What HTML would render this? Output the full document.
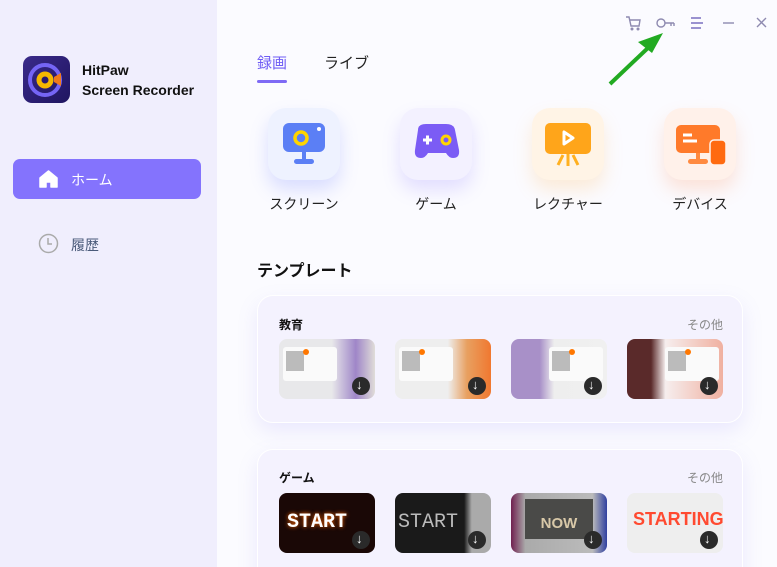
<!DOCTYPE html>
<html><head><meta charset="utf-8"><style>
*{margin:0;padding:0;box-sizing:border-box}
html,body{width:777px;height:567px;overflow:hidden}
body{font-family:"Liberation Sans","Noto Sans CJK JP",sans-serif;background:#fbfbff;position:relative}
#w{position:absolute;left:0;top:0;width:777px;height:567px;overflow:hidden}
.side{position:absolute;left:0;top:0;width:217px;height:567px;background:#f0eefd}
.abs{position:absolute}
.logo{left:23px;top:56px;width:47px;height:47px;border-radius:9px;background:linear-gradient(135deg,#3a2a8a,#1f1560)}
.brand{left:82px;top:60px;font-size:14px;font-weight:bold;color:#111;line-height:20px}
.nav{left:13px;top:159px;width:188px;height:40px;border-radius:7px;background:#8473fd;color:#fff;font-size:14px}
.ico{width:72px;height:72px;border-radius:18px;top:108px}
.lbl{top:194px;font-size:14px;color:#222;width:120px;text-align:center}
.card{left:257px;width:486px;border-radius:16px;background:#f4f2fe;border:1px solid #fff;box-shadow:0 8px 20px rgba(140,130,240,.15)}
.th{width:96px;height:60px;border-radius:8px;overflow:hidden}
.pn{position:absolute;left:4px;top:8px;width:54px;height:34px;background:#fafafa;border-radius:3px}
.pn:before{content:"";position:absolute;left:3px;top:4px;width:18px;height:20px;background:#bbb}
.pn:after{content:"";position:absolute;left:20px;top:2px;width:6px;height:6px;border-radius:50%;background:#f70}
.dl{position:absolute;right:5px;bottom:4px;width:18px;height:18px;border-radius:50%;background:#2a2a2a}
.dl:after{content:"↓";color:#fff;font-size:13px;position:absolute;left:4px;top:0;font-weight:bold}
.t{font-size:12px;font-weight:bold;color:#111}
.m{font-size:12px;color:#888}
</style></head><body><div id="w">
<div class="side"></div>
<div class="abs logo"><svg width="47" height="47" viewBox="0 0 47 47"><circle cx="22" cy="24" r="15" fill="none" stroke="#7565f5" stroke-width="4"/><circle cx="22" cy="24" r="8.5" fill="#f5b800"/><circle cx="22" cy="24" r="3.5" fill="#2a1b6e"/><path d="M31 21l7-4v13l-7-4z" fill="#f07a1a"/></svg></div>
<div class="abs brand">HitPaw<br>Screen Recorder</div>
<div class="abs nav"><svg class="abs" style="left:26px;top:11px" width="19" height="18" viewBox="0 0 19 18"><path d="M9.5 1L1 8v9h6v-5h5v5h6V8z" fill="#fff" stroke="#fff" stroke-linejoin="round" stroke-width="1.5"/></svg><span class="abs" style="left:58px;top:11px">ホーム</span></div>
<svg class="abs" style="left:38px;top:233px" width="21" height="21"><circle cx="10.5" cy="10.5" r="9" fill="none" stroke="#aaa" stroke-width="1.5"/><path d="M10 5v6h4" fill="none" stroke="#aaa" stroke-width="1.5"/></svg>
<div class="abs" style="left:71px;top:235px;font-size:14px;color:#4a5a7a">履歴</div>

<svg class="abs" style="left:624px;top:14px" width="150" height="18" viewBox="0 0 150 18" fill="none" stroke="#8e8ab0" stroke-width="1.4"><path d="M2 3h3l2 9h8l1-6H6"/><circle cx="8" cy="15" r=".8"/><circle cx="14" cy="15" r=".8"/><circle cx="37" cy="9" r="4"/><path d="M41 9h9M47 9v3M50 9v3"/><path d="M67 4h10M67 9h12M67 14h10" stroke="#7a70c0"/><path d="M99 9h11"/><path d="M133 4l9 9M142 4l-9 9"/></svg>
<svg class="abs" style="left:605px;top:28px" width="65" height="60"><path d="M5 56L45 18" stroke="#22aa22" stroke-width="4"/><path d="M58 5L33 14l14 11z" fill="#22aa22"/></svg>

<div class="abs" style="left:257px;top:52px;font-size:15px;color:#6f5cf5">録画</div>
<div class="abs" style="left:257px;top:80px;width:30px;height:3px;background:#7e6af5;border-radius:2px"></div>
<div class="abs" style="left:324px;top:52px;font-size:15px;color:#222">ライブ</div>

<div class="abs ico" style="left:268px;background:#eef2ff;box-shadow:0 10px 18px rgba(100,120,255,.22)"><svg width="72" height="72"><rect x="15" y="15" width="42" height="29" rx="6" fill="#5b7ff5"/><circle cx="33" cy="30" r="6" fill="none" stroke="#ffd400" stroke-width="3.5"/><circle cx="51" cy="21" r="2" fill="#fff"/><rect x="34" y="44" width="4" height="8" fill="#5b7ff5"/><rect x="26" y="51" width="20" height="5" rx="2.5" fill="#5b7ff5"/></svg></div>
<div class="abs ico" style="left:400px;background:#f3f1ff;box-shadow:0 10px 18px rgba(130,110,255,.2)"><svg width="72" height="72"><path d="M18 22q0-6 8-6h20q8 0 9 6l4 20q1 8-6 8-4 0-7-5H28q-3 5-7 5-7 0-6-8z" fill="#7b5cf5"/><path d="M23 32h9M27.5 27.5v9" stroke="#fff" stroke-width="3"/><circle cx="46" cy="32" r="4" fill="none" stroke="#ffd400" stroke-width="3"/></svg></div>
<div class="abs ico" style="left:532px;background:#fff4e6;box-shadow:0 10px 18px rgba(255,180,80,.22)"><svg width="72" height="72"><rect x="13" y="15" width="46" height="31" rx="5" fill="#ffa51a"/><path d="M32 24v12l9-6z" fill="none" stroke="#fff" stroke-width="3" stroke-linejoin="round"/><path d="M36 46v12M31 47l-5 10M41 47l5 10" stroke="#ffb020" stroke-width="3"/></svg></div>
<div class="abs ico" style="left:664px;background:#fff1ea;box-shadow:0 10px 18px rgba(255,140,80,.22)"><svg width="72" height="72"><rect x="12" y="17" width="44" height="28" rx="5" fill="#ff7a2a"/><path d="M19 27h9M19 33h14" stroke="#fff" stroke-width="3"/><rect x="32" y="45" width="4" height="6" fill="#ff8a40"/><rect x="24" y="51" width="20" height="5" rx="2.5" fill="#ff8a40"/><rect x="46" y="32" width="16" height="25" rx="4" fill="#ff6a10" stroke="#fff1ea" stroke-width="1.5"/></svg></div>
<div class="abs lbl" style="left:244px">スクリーン</div>
<div class="abs lbl" style="left:376px">ゲーム</div>
<div class="abs lbl" style="left:508px">レクチャー</div>
<div class="abs lbl" style="left:640px">デバイス</div>

<div class="abs" style="left:257px;top:257px;font-size:16px;font-weight:bold;color:#111">テンプレート</div>

<div class="abs card" style="top:295px;height:128px"></div>
<div class="abs t" style="left:279px;top:316px">教育</div>
<div class="abs m" style="left:687px;top:316px">その他</div>
<div class="abs th" style="left:279px;top:339px;background:linear-gradient(90deg,#e8e8ea 55%,#9f86c8 80%,#e0ddd8)"><div class="pn"></div><div class="dl"></div></div>
<div class="abs th" style="left:395px;top:339px;background:linear-gradient(90deg,#eee 55%,#e8a060 75%,#f07830)"><div class="pn"></div><div class="dl"></div></div>
<div class="abs th" style="left:511px;top:339px;background:linear-gradient(90deg,#a890c8 30%,#eee 45%,#f0f0f0)"><div class="pn" style="left:38px"></div><div class="dl"></div></div>
<div class="abs th" style="left:627px;top:339px;background:linear-gradient(90deg,#5a2a2a 25%,#f6eeee 40%,#f0b0a0)"><div class="pn" style="left:38px"></div><div class="dl"></div></div>

<div class="abs card" style="top:449px;height:140px"></div>
<div class="abs t" style="left:279px;top:469px">ゲーム</div>
<div class="abs m" style="left:687px;top:469px">その他</div>
<div class="abs th" style="left:279px;top:493px;background:#1a0806"><div class="abs" style="left:8px;top:18px;color:#fff;font-weight:bold;font-size:20px;font-family:'Liberation Mono',monospace;text-shadow:0 0 4px #f60">START</div><div class="dl"></div></div>
<div class="abs th" style="left:395px;top:493px;background:linear-gradient(90deg,#1a1a1a 72%,#aaa 80%)"><div class="abs" style="left:3px;top:18px;color:#bbb;font-size:20px;font-family:'Liberation Mono',monospace">START</div><div class="dl"></div></div>
<div class="abs th" style="left:511px;top:493px;background:linear-gradient(90deg,#702050,#aaa 15%,#bbb 85%,#3040a0)"><div class="abs" style="left:14px;top:6px;width:68px;height:40px;background:#4a4a48;color:#d8c8a8;font-size:15px;text-align:center;padding-top:16px;font-weight:bold">NOW</div><div class="dl"></div></div>
<div class="abs th" style="left:627px;top:493px;background:#eee"><div class="abs" style="left:6px;top:16px;color:#ff4a30;font-weight:bold;font-size:18px">STARTING!</div><div class="dl"></div></div>
</div></body></html>
